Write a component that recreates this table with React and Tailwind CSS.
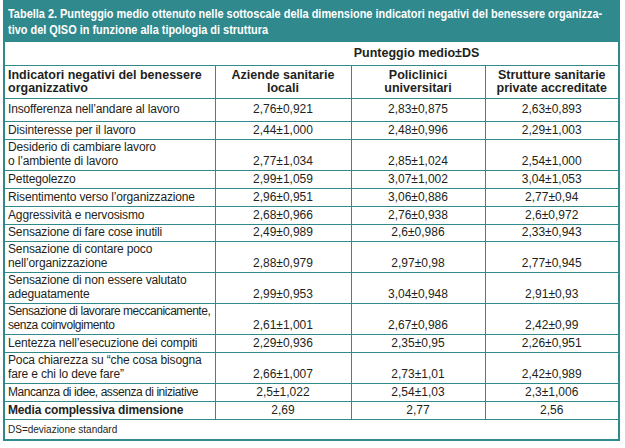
const rows = [
  { label: ["Insofferenza nell\u2019andare al lavoro"], v: ["2,76±0,921", "2,83±0,875", "2,63±0,893"], h: "h-[23px]" },
  { label: ["Disinteresse per il lavoro"], v: ["2,44±1,000", "2,48±0,996", "2,29±1,003"], h: "h-[18px]" },
  { label: ["Desiderio di cambiare lavoro", "o l\u2019ambiente di lavoro"], v: ["2,77±1,034", "2,85±1,024", "2,54±1,000"], h: "h-[30px]" },
  { label: ["Pettegolezzo"], v: ["2,99±1,059", "3,07±1,002", "3,04±1,053"], h: "h-[18px]" },
  { label: ["Risentimento verso l\u2019organizzazione"], v: ["2,96±0,951", "3,06±0,886", "2,77±0,94"], h: "h-[18px]" },
  { label: ["Aggressività e nervosismo"], v: ["2,68±0,966", "2,76±0,938", "2,6±0,972"], h: "h-[18px]" },
  { label: ["Sensazione di fare cose inutili"], v: ["2,49±0,989", "2,6±0,986", "2,33±0,943"], h: "h-[17px]" },
  { label: ["Sensazione di contare poco", "nell\u2019organizzazione"], v: ["2,88±0,979", "2,97±0,98", "2,77±0,945"], h: "h-[31px]" },
  { label: ["Sensazione di non essere valutato", "adeguatamente"], v: ["2,99±0,953", "3,04±0,948", "2,91±0,93"], h: "h-[31px]" },
  { label: ["Sensazione di lavorare meccanicamente,", "senza coinvolgimento"], v: ["2,61±1,001", "2,67±0,986", "2,42±0,99"], h: "h-[31px]", tight: true },
  { label: ["Lentezza nell\u2019esecuzione dei compiti"], v: ["2,29±0,936", "2,35±0,95", "2,26±0,951"], h: "h-[18px]" },
  { label: ["Poca chiarezza su \u201cche cosa bisogna", "fare e chi lo deve fare\u201d"], v: ["2,66±1,007", "2,73±1,01", "2,42±0,989"], h: "h-[31px]" },
  { label: ["Mancanza di idee, assenza di iniziative"], v: ["2,5±1,022", "2,54±1,03", "2,3±1,006"], h: "h-[18px]", tight: true },
];

const line = "border-[#2f898d]";

export default function App() {
  return (
    <div className="w-[625px] h-[448px] bg-white font-['Liberation_Sans',Arial,sans-serif] text-[#231f20]">
      <div className={`ml-[3px] w-[617px] border-x-2 border-b-2 ${line}`}>
        {/* Title band */}
        <div className="h-[42px] bg-[#2f898d] -mx-[2px] px-[5px] pt-[6px] text-white font-bold text-[12.5px] leading-[16px] whitespace-nowrap">
          <div className="origin-left scale-x-[0.875]">
            Tabella 2. Punteggio medio ottenuto nelle sottoscale della dimensione indicatori negativi del benessere organizza-
          </div>
          <div className="origin-left scale-x-[0.875]">tivo del QISO in funzione alla tipologia di struttura</div>
        </div>

        <table className="w-full table-fixed border-collapse text-[12px] whitespace-nowrap">
          <colgroup>
            <col className="w-[210px]" />
            <col className="w-[136px]" />
            <col className="w-[134px]" />
            <col />
          </colgroup>
          <tbody>
            <tr className="h-[23px]">
              <td />
              <td colSpan={3} className="text-center font-bold text-[12.5px] align-middle">
                Punteggio medio±DS
              </td>
            </tr>
            <tr className={`h-[33px] border-t ${line} font-bold text-[12.5px] leading-[13px]`}>
              <td className="px-[3px] align-middle">
                Indicatori negativi del benessere
                <br />
                organizzativo
              </td>
              <td className={`border-l ${line} text-center align-middle`}>
                Aziende sanitarie
                <br />
                locali
              </td>
              <td className={`border-l ${line} text-center align-middle`}>
                Policlinici
                <br />
                universitari
              </td>
              <td className={`border-l ${line} text-center align-middle`}>
                Strutture sanitarie
                <br />
                private accreditate
              </td>
            </tr>
            {rows.map((r, i) => (
              <tr key={i} className={`${r.h} border-t ${line} leading-[14px]`}>
                <td
                  className={`px-[3px] ${r.tight ? "tracking-[-0.45px]" : "tracking-[-0.15px]"} align-bottom ${
                    i === 0 ? "pb-[5px]" : "pb-[2px]"
                  }`}
                >
                  {r.label.map((t, j) => (
                    <div key={j}>{t}</div>
                  ))}
                </td>
                {r.v.map((v, j) => (
                  <td
                    key={j}
                    className={`border-l ${line} text-center align-bottom ${i === 0 ? "pb-[5px]" : "pb-[2px]"}`}
                  >
                    {v}
                  </td>
                ))}
              </tr>
            ))}
            <tr className={`h-[18px] border-t ${line} leading-[14px]`}>
              <td className="px-[3px] font-bold tracking-[-0.15px] align-middle">Media complessiva dimensione</td>
              <td className={`border-l ${line} text-center align-middle`}>2,69</td>
              <td className={`border-l ${line} text-center align-middle`}>2,77</td>
              <td className={`border-l ${line} text-center align-middle`}>2,56</td>
            </tr>
            <tr className={`h-[20px] border-t ${line}`}>
              <td colSpan={4} className="px-[3px] text-[10px] align-middle">
                DS=deviazione standard
              </td>
            </tr>
          </tbody>
        </table>
      </div>
    </div>
  );
}
